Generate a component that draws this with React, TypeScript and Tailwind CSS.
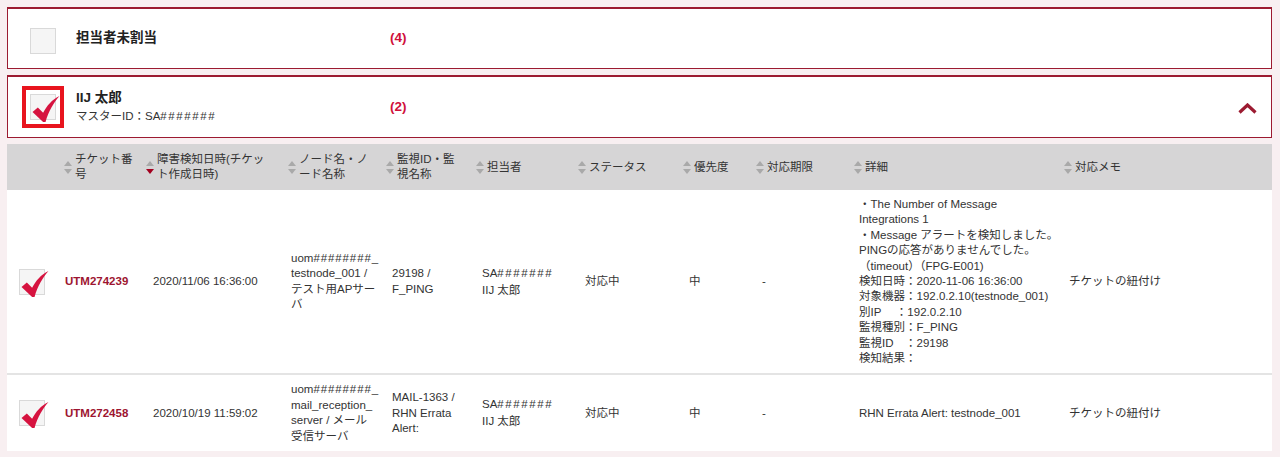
import type { ReactNode } from 'react';

const cols = 'grid grid-cols-[53px_82px_142px_98px_90px_102px_105px_73px_98px_210px_211px]';

function Check() {
  return (
    <svg viewBox="0 0 28 27" className="absolute left-[1px] top-[1px] h-[26px] w-[28px]">
      <path d="M0 16.5 L5.5 12 L11 17.5 C15 10 20 4 28 0 C22 7 17 15 13.5 27 L11 27 Z" fill="#d6133f" />
    </svg>
  );
}

function Box({ checked, focused }: { checked?: boolean; focused?: boolean }) {
  return (
    <div
      className={`relative h-[26px] w-[26px] border border-[#d9d9d9] bg-[#f5f5f5] ${
        focused ? 'outline-4 outline-solid outline-[#e8141e] outline-offset-[4px]' : ''
      }`}
    >
      {checked && <Check />}
    </div>
  );
}

function SortIcon({ active }: { active?: boolean }) {
  return (
    <svg width="8" height="13" viewBox="0 0 8 13" className="shrink-0">
      <path d="M4 0 L8 5 L0 5 Z" fill="#a9a9a9" />
      <path d="M0 8 L8 8 L4 13 Z" fill={active ? '#a3001f' : '#a9a9a9'} />
    </svg>
  );
}

function Head({ children, active }: { children: ReactNode; active?: boolean }) {
  return (
    <div className="flex items-center gap-[3px] pl-[4px]">
      <SortIcon active={active} />
      <span className="leading-[15px]">{children}</span>
    </div>
  );
}

// '#' is wider in the original font, so spread those runs out a little
function T({ s }: { s: string }) {
  const parts = s.split(/(#+)/);
  return (
    <>
      {parts.map((p, i) =>
        p.startsWith('#') ? (
          <span key={i} className="tracking-[0.9px]">{p}</span>
        ) : (
          <span key={i}>{p}</span>
        ),
      )}
    </>
  );
}

function Lines({ lines }: { lines: string[] }) {
  return (
    <div className="whitespace-pre">
      {lines.map((l, i) => (
        <div key={i}>
          <T s={l} />
        </div>
      ))}
    </div>
  );
}

interface Row {
  id: string;
  date: string;
  node: string[];
  monitor: string[];
  detail: string[];
}

const rows: Row[] = [
  {
    id: 'UTM274239',
    date: '2020/11/06 16:36:00',
    node: ['uom########_', 'testnode_001 /', 'テスト用APサー', 'バ'],
    monitor: ['29198 /', 'F_PING'],
    detail: [
      '・The Number of Message',
      'Integrations 1',
      '・Message アラートを検知しました。',
      'PINGの応答がありませんでした。',
      '（timeout）（FPG-E001)',
      '検知日時：2020-11-06 16:36:00',
      '対象機器：192.0.2.10(testnode_001)',
      '別IP\u3000 ：192.0.2.10',
      '監視種別：F_PING',
      '監視ID\u3000：29198',
      '検知結果：',
    ],
  },
  {
    id: 'UTM272458',
    date: '2020/10/19 11:59:02',
    node: ['uom########_', 'mail_reception_', 'server / メール', '受信サーバ'],
    monitor: ['MAIL-1363 /', 'RHN Errata', 'Alert:'],
    detail: ['RHN Errata Alert: testnode_001'],
  },
];

export default function App() {
  return (
    <div className="min-h-[457px] bg-[#f8eff1] pb-2 pl-[7px] pr-[8px] pt-[7px] font-['Liberation_Sans','Noto_Sans_CJK_JP',sans-serif] text-[11.5px] text-[#333]">
      {/* unassigned group */}
      <div className="flex h-[62px] items-center border border-t-2 border-[#9c1b31] bg-white">
        <div className="w-[68px] pl-[22px] pt-[5px]">
          <Box />
        </div>
        <div className="w-[314px] text-[13.5px] font-bold text-[#222]">担当者未割当</div>
        <div className="text-[13.5px] font-bold text-[#d0103a]">(4)</div>
      </div>

      {/* assignee group */}
      <div className="mt-[6px] flex h-[63px] items-center border border-t-2 border-[#9c1b31] bg-white pr-[14px]">
        <div className="w-[68px] pl-[22px]">
          <Box checked focused />
        </div>
        <div className="w-[314px]">
          <div className="text-[13.5px] font-bold leading-[18px] text-[#222]">IIJ 太郎</div>
          <div className="text-[11.5px] leading-[18px] text-[#333]">
            マスターID：SA<span className="tracking-[1.6px]">#######</span>
          </div>
        </div>
        <div className="text-[13.5px] font-bold text-[#d0103a]">(2)</div>
        <svg width="19" height="11" viewBox="0 0 19 11" className="ml-auto mt-[3px]">
          <path d="M1.5 9.5 L9.5 2 L17.5 9.5" fill="none" stroke="#9c1b31" strokeWidth="3.2" />
        </svg>
      </div>

      {/* tickets table */}
      <div className="mt-[6px]">
        <div className={`${cols} h-[46px] items-center bg-[#d6d5d6] text-[11.5px] text-[#333]`}>
          <div />
          <Head>チケット番<br />号</Head>
          <Head active>障害検知日時(チケッ<br />ト作成日時)</Head>
          <Head>ノード名・ノ<br />ード名称</Head>
          <Head>監視ID・監<br />視名称</Head>
          <Head>担当者</Head>
          <Head>ステータス</Head>
          <Head>優先度</Head>
          <Head>対応期限</Head>
          <Head>詳細</Head>
          <Head>対応メモ</Head>
        </div>

        {rows.map((r, i) => (
          <div
            key={r.id}
            className={`${cols} items-center bg-white py-[7px] leading-[15.4px] ${
              i < rows.length - 1 ? 'border-b-2 border-[#e4e4e4]' : ''
            }`}
          >
            <div className="pl-[12px]">
              <Box checked />
            </div>
            <div className="pl-[5px] font-bold text-[#9d1530]">{r.id}</div>
            <div className="pl-[11px]">{r.date}</div>
            <div className="pl-[7px]">
              <Lines lines={r.node} />
            </div>
            <div className="pl-[10px]">
              <Lines lines={r.monitor} />
            </div>
            <div className="pl-[10px] leading-[17px]">
              <div>
                SA<span className="tracking-[1.6px]">#######</span>
              </div>
              <div>IIJ 太郎</div>
            </div>
            <div className="pl-[11px]">対応中</div>
            <div className="pl-[10px]">中</div>
            <div className="pl-[10px]">-</div>
            <div className="pl-[9px]">
              <Lines lines={r.detail} />
            </div>
            <div className="pl-[9px]">チケットの紐付け</div>
          </div>
        ))}
      </div>
    </div>
  );
}
